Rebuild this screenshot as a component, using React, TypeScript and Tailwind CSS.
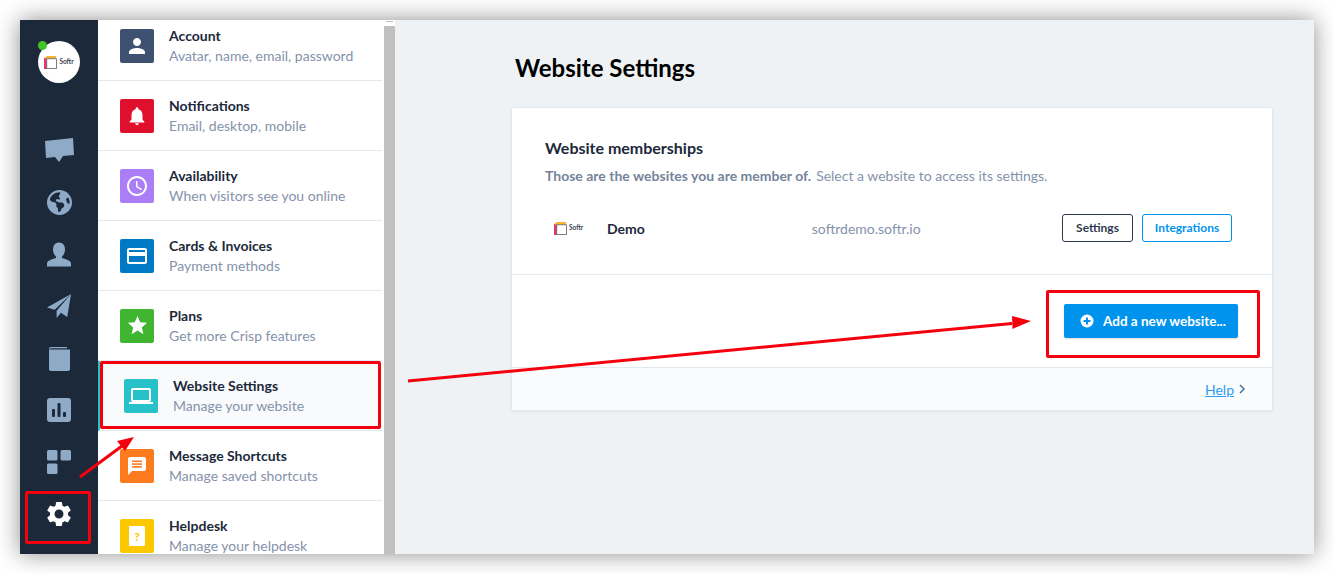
import React from "react";
import { FaEarthAmericas } from "react-icons/fa6";
import { MdSettings, MdPerson, MdNotifications, MdAccessTime, MdCreditCard, MdStar, MdLaptop } from "react-icons/md";

const font = { fontFamily: '"Lato", "Noto Sans", sans-serif' };

function Logo({ big }: { big?: boolean }) {
  return (
    <span className={big ? "flex items-center gap-[3px]" : "flex items-center gap-[2px]"}>
      <svg viewBox="0 0 14 14" className={big ? "h-[15px] w-[15px]" : "h-[13px] w-[13px]"}>
        <rect x="0" y="2" width="3" height="12" fill="#e8336d" />
        <path d="M1 2 L3 0 H13 V3 H1 Z" fill="#fbb130" />
        <rect x="3" y="3" width="10.4" height="10.6" fill="#fff" stroke="#4b5563" strokeWidth="0.8" />
      </svg>
      <span className={big ? "text-[9px] font-bold text-[#3a4452]" : "text-[6.5px] font-bold text-[#3a4452]"}>Softr</span>
    </span>
  );
}

const rail = [
  <svg key="chat" viewBox="0 0 30 26" className="h-[26px] w-[30px]" fill="#8eaac6"><path d="M1 4 L29 1 L30 18 L19 19 L15 25 L11 20 L2 21 Z" /></svg>,
  <FaEarthAmericas key="globe" className="h-[25px] w-[25px] text-[#8eaac6]" />,
  <svg key="user" viewBox="0 0 24 24" className="h-[25px] w-[24px]" fill="#8eaac6"><path d="M12 0 C16 0 18 3 18 7 C18 10 16.5 13 15 14 V15.5 C19 17 24 18 24 21 V24 H0 V21 C0 18 5 17 9 15.5 V14 C7.5 13 6 10 6 7 C6 3 8 0 12 0 Z" /></svg>,
  <svg key="plane" viewBox="0 0 26 26" className="h-[25px] w-[25px]" fill="#8eaac6"><path d="M25 0 L0 14 L8 16.5 Z M25 0 L10 17.5 L10 25 L14.5 19.5 L21 24 Z" /></svg>,
  <svg key="book" viewBox="0 0 22 25" className="h-[25px] w-[22px]" fill="#8eaac6"><path d="M1 3 Q1 1 3 1 H19 V2.2 H3 Q2.4 2.2 2.2 3 Z" /><path d="M1 3.5 H22 V23 Q22 25 20 25 H3 Q1 25 1 23 Z" /></svg>,
  <svg key="chart" viewBox="0 0 24 24" className="h-[24px] w-[24px]"><rect width="24" height="24" rx="3" fill="#8eaac6" /><rect x="5" y="11" width="3" height="8" rx="1" fill="#1c293b" /><rect x="10.5" y="5" width="3" height="14" rx="1" fill="#1c293b" /><rect x="16" y="14" width="3" height="5" rx="1" fill="#1c293b" /></svg>,
  <svg key="grid" viewBox="0 0 24 24" className="h-[24px] w-[24px]" fill="#8eaac6"><rect x="0" y="0" width="10.5" height="10.5" rx="1.5" /><rect x="13.5" y="0" width="10.5" height="10.5" rx="1.5" /><rect x="0" y="13.5" width="10.5" height="10.5" rx="1.5" /></svg>,
  <MdSettings key="gear" className="h-[30px] w-[30px] text-white" />,
];

const items = [
  { t: "Account", s: "Avatar, name, email, password", c: "bg-[#3f5170]", i: <MdPerson className="h-[24px] w-[24px] text-white" /> },
  { t: "Notifications", s: "Email, desktop, mobile", c: "bg-[#e10f2e]", i: <MdNotifications className="h-[22px] w-[22px] text-white" /> },
  { t: "Availability", s: "When visitors see you online", c: "bg-[#ab7df7]", i: <MdAccessTime className="h-[24px] w-[24px] text-white" /> },
  { t: "Cards & Invoices", s: "Payment methods", c: "bg-[#0079c4]", i: <MdCreditCard className="h-[24px] w-[24px] text-white" /> },
  { t: "Plans", s: "Get more Crisp features", c: "bg-[#40b630]", i: <MdStar className="h-[23px] w-[23px] text-white" /> },
  { t: "Website Settings", s: "Manage your website", c: "bg-[#26c1c9]", active: true, i: <MdLaptop className="h-[24px] w-[24px] text-white" /> },
  {
    t: "Message Shortcuts", s: "Manage saved shortcuts", c: "bg-[#fd7b1f]",
    i: (
      <svg viewBox="0 0 18 18" className="h-[18px] w-[18px]">
        <path d="M2 0 H16 Q18 0 18 2 V12 Q18 14 16 14 H4 L0 18 V2 Q0 0 2 0 Z" fill="#fff" />
        <rect x="4" y="3.5" width="10" height="1.6" fill="#fd7b1f" />
        <rect x="4" y="6.3" width="10" height="1.6" fill="#fd7b1f" />
        <rect x="4" y="9.1" width="10" height="1.6" fill="#fd7b1f" />
      </svg>
    ),
  },
  {
    t: "Helpdesk", s: "Manage your helpdesk", c: "bg-[#fdc800]",
    i: (
      <span className="relative flex h-[20px] w-[16px] items-center justify-center rounded-[1px] bg-white pt-[2px] text-[12px] font-bold leading-none text-[#fdc800]">?</span>
    ),
  },
];

function Row({ it }: { it: (typeof items)[number] }) {
  const active = (it as any).active;
  return (
    <div
      className={
        active
          ? "flex h-[70px] shrink-0 items-center border-b border-[#e3e9f1] border-l-2 border-l-[#26c1c9] bg-[#f8fafc] pl-[24px]"
          : "flex h-[70px] shrink-0 items-center border-b border-[#e3e9f1] pl-[22px]"
      }
    >
      <span className={"flex h-[34px] w-[34px] shrink-0 items-center justify-center rounded-[2px] " + it.c}>{it.i}</span>
      <div className="ml-[15px] flex flex-col gap-[3px]">
        <div className="text-[14px] font-bold leading-[17px] text-[#1c293b]">{it.t}</div>
        <div className="text-[14px] leading-[17px] text-[#8592ab]">{it.s}</div>
      </div>
    </div>
  );
}

export default function App() {
  return (
    <div style={font} className="relative h-[574px] w-[1334px] overflow-hidden bg-white p-[20px]">
      <div className="flex h-[534px] w-[1294px] overflow-hidden shadow-[0_0_22px_rgba(0,0,0,0.45)]">
        <aside className="flex w-[78px] shrink-0 flex-col items-center bg-[#1c293b]">
          <div className="relative mt-[21px] mb-[41px] flex h-[42px] w-[42px] items-center justify-center rounded-full bg-white">
            <Logo />
            <span className="absolute left-0 top-0 h-[9px] w-[9px] rounded-full bg-[#40c528]" />
          </div>
          {rail.map((r, i) => (
            <div key={i} className="flex h-[52px] w-full shrink-0 items-center justify-center">{r}</div>
          ))}
        </aside>
        <div className="relative w-[286px] shrink-0 overflow-hidden bg-white pr-[2px]">
          <div className="-mt-[9px] flex flex-col">
            {items.map((it) => <Row key={it.t} it={it} />)}
          </div>
        </div>
        <div className="flex w-[11px] shrink-0 flex-col bg-white">
          <div className="flex h-[6px] justify-center pt-[1px]"><span className="h-[1px] w-[7px] bg-[#c0c0c0]" /></div>
          <div className="ml-[0px] w-[11px] flex-1 bg-[#c0c0c0]" />
        </div>
        <main className="min-w-0 flex-1 bg-[#eff2f5] pl-[116px] pr-[41px]">
          <h1 className="ml-[4px] mt-[33px] text-[24px] font-bold leading-[30px] text-black">Website Settings</h1>
          <section className="mt-[24px] h-[304px] overflow-hidden rounded-[2px] border border-[#e3e9f1] bg-white shadow-[0_1px_3px_rgba(0,0,0,0.06)]">
            <div className="h-[167px] border-b border-[#e3e9f1] px-[33px] pt-[30px]">
              <h2 className="text-[16px] font-bold leading-[20px] text-[#1c293b]">Website memberships</h2>
              <p className="mt-[9px] text-[14px] leading-[18px] text-[#8592ab]">
                <span className="mr-[5px] font-bold text-[#75849b]">Those are the websites you are member of.</span>
                Select a website to access its settings.
              </p>
              <div className="mt-[29px] flex h-[28px] items-center">
                <span className="ml-[9px] w-[53px]"><Logo /></span>
                <span className="text-[14px] font-bold text-[#1c293b]">Demo</span>
                <span className="ml-[167px] text-[14px] text-[#8592ab]">softrdemo.softr.io</span>
                <button className="ml-auto mr-[9px] h-[28px] w-[71px] rounded-[3px] border border-[#2d3a4d] text-[12px] font-bold text-[#2d3a4d]">Settings</button>
                <button className="mr-[7px] h-[28px] w-[90px] rounded-[3px] border border-[#0093ee] text-[12px] font-bold text-[#0093ee]">Integrations</button>
              </div>
            </div>
            <div className="flex h-[93px] items-center justify-end border-b border-[#e3e9f1] pr-[34px]">
              <button className="flex h-[34px] w-[174px] items-center rounded-[2px] bg-[#0093ee] pl-[16px] text-[13.5px] font-bold text-white shadow-[0_1px_2px_rgba(0,0,0,0.15)]">
                <svg viewBox="0 0 14 14" className="mr-[9px] h-[14px] w-[14px]"><circle cx="7" cy="7" r="6.5" fill="#fff" /><path d="M7 3.5 V10.5 M3.5 7 H10.5" stroke="#0093ee" strokeWidth="2" /></svg>
                Add a new website...
              </button>
            </div>
            <div className="flex h-[42px] items-center justify-end gap-[5px] bg-[#f9fbfc] pr-[27px]">
              <a className="text-[14px] text-[#2a9df4] underline">Help</a>
              <svg viewBox="0 0 6 10" className="h-[10px] w-[6px]" fill="none" stroke="#3d6b94" strokeWidth="1.4"><path d="M1 1 L5 5 L1 9" /></svg>
            </div>
          </section>
        </main>
      </div>

      {/* Annotations on top of the screenshot */}
      <div className="absolute left-[100px] top-[361px] h-[68px] w-[281px] rounded-[2px] border-[3px] border-[#f5000d]" />
      <div className="absolute left-[25px] top-[491px] h-[53px] w-[66px] rounded-[2px] border-[3px] border-[#f5000d]" />
      <div className="absolute left-[1046px] top-[290px] h-[68px] w-[214px] rounded-[2px] border-[3px] border-[#f5000d]" />
      <svg className="pointer-events-none absolute left-0 top-0 h-[574px] w-[1334px]" viewBox="0 0 1334 574">
        <path d="M408 381 L1012 323.5" stroke="#f5000d" strokeWidth="3" fill="none" />
        <path d="M1031 321 L1012 316 L1012.5 329 Z" fill="#f5000d" />
        <path d="M80 477 L122 446" stroke="#f5000d" strokeWidth="3" fill="none" />
        <path d="M134 437 L117 441 L125 451 Z" fill="#f5000d" />
      </svg>
    </div>
  );
}
